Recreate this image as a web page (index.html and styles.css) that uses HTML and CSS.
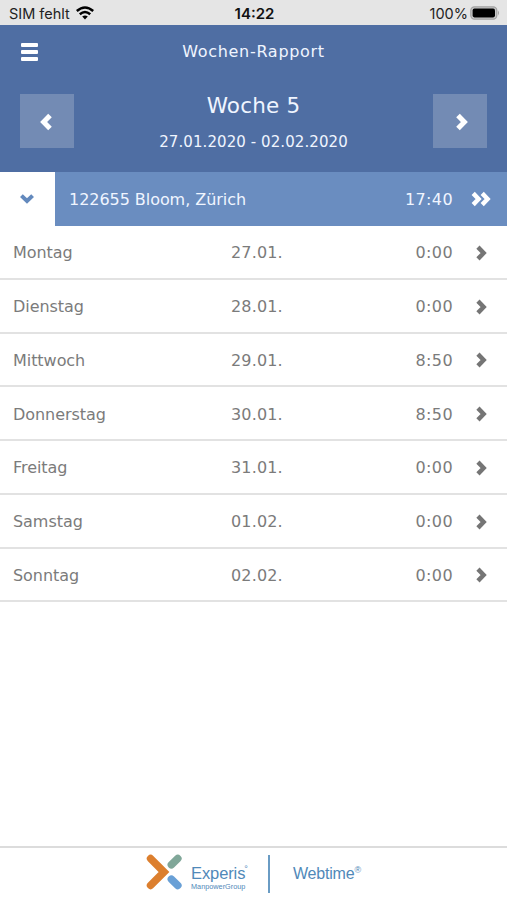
FILE: index.html
```html
<!DOCTYPE html>
<html lang="de">
  <head>
    <meta charset="UTF-8" />
    <meta name="viewport" content="width=device-width, initial-scale=1.0" />
    <title>Wochen-Rapport</title>
    <link rel="stylesheet" href="styles.css">
  </head>
  <body>
    <svg class="defs" width="0" height="0">
      <symbol id="chevron" viewBox="0 0 12 18">
        <path d="M2 2.4 L8.4 9 L2 15.6" fill="none" stroke="currentColor" stroke-width="5" />
      </symbol>
    </svg>
    <div class="status">
      <div class="carrier">
        <span>SIM fehlt</span>
        <svg class="wifi" width="18" height="14" viewBox="0 0 18 14">
          <g fill="none" stroke="#000" stroke-width="2.5">
            <path d="M0.8 5 Q9 -2 17.2 5" />
            <path d="M3.8 8.3 Q9 3.8 14.2 8.3" />
          </g>
          <path d="M6.2 10.6 Q9 8.3 11.8 10.6 L9 13.6 Z" />
        </svg>
      </div>
      <div class="clock">14:22</div>
      <div class="power">
        <span>100%</span>
        <svg width="30" height="14" viewBox="0 0 30 14">
          <rect x="0.8" y="0.8" width="26" height="12.4" rx="3.6" fill="#c9c9c9" stroke="#a2a2a2" stroke-width="1.2" />
          <rect x="2.6" y="2.6" width="22.4" height="8.8" rx="1.8" />
          <path d="M28 4.6 Q30 7 28 9.4 Z" fill="#a2a2a2" />
        </svg>
      </div>
    </div>
    <div class="header">
      <div class="title-bar">
        <div class="menu"><i></i><i></i><i></i></div>
        <h1>Wochen-Rapport</h1>
      </div>
      <div class="week">
        <div class="nav nav-prev"><svg class="prev" width="12" height="18"><use href="#chevron" /></svg></div>
        <div class="week-text">
          <h2>Woche 5</h2>
          <p>27.01.2020 - 02.02.2020</p>
        </div>
        <div class="nav nav-next"><svg width="12" height="18"><use href="#chevron" /></svg></div>
      </div>
    </div>
    <div class="project">
      <div class="toggle">
        <svg width="14" height="10" viewBox="0 0 14 10">
          <path d="M1.4 1.6 L7 7 L12.6 1.6" fill="none" stroke="currentColor" stroke-width="4" />
        </svg>
      </div>
      <div class="project-name">122655 Bloom, Zürich</div>
      <div class="hours">17:40</div>
      <svg class="double" width="20" height="16" viewBox="0 0 20 16">
        <path d="M2.2 2.4 L7.6 8 L2.2 13.6 M11.2 2.4 L16.6 8 L11.2 13.6" fill="none" stroke="currentColor" stroke-width="4.4" />
      </svg>
    </div>
    <div class="days">
      <div class="day">
        <span class="name">Montag</span><span class="date">27.01.</span><span class="hours">0:00</span>
        <svg class="arrow" width="11" height="16"><use href="#chevron" /></svg>
      </div>
      <div class="day">
        <span class="name">Dienstag</span><span class="date">28.01.</span><span class="hours">0:00</span>
        <svg class="arrow" width="11" height="16"><use href="#chevron" /></svg>
      </div>
      <div class="day">
        <span class="name">Mittwoch</span><span class="date">29.01.</span><span class="hours">8:50</span>
        <svg class="arrow" width="11" height="16"><use href="#chevron" /></svg>
      </div>
      <div class="day">
        <span class="name">Donnerstag</span><span class="date">30.01.</span><span class="hours">8:50</span>
        <svg class="arrow" width="11" height="16"><use href="#chevron" /></svg>
      </div>
      <div class="day">
        <span class="name">Freitag</span><span class="date">31.01.</span><span class="hours">0:00</span>
        <svg class="arrow" width="11" height="16"><use href="#chevron" /></svg>
      </div>
      <div class="day">
        <span class="name">Samstag</span><span class="date">01.02.</span><span class="hours">0:00</span>
        <svg class="arrow" width="11" height="16"><use href="#chevron" /></svg>
      </div>
      <div class="day">
        <span class="name">Sonntag</span><span class="date">02.02.</span><span class="hours">0:00</span>
        <svg class="arrow" width="11" height="16"><use href="#chevron" /></svg>
      </div>
    </div>
    <div class="footer">
      <svg class="logo" width="36" height="36" viewBox="0 0 36 36">
        <g fill="none" stroke-width="7.6" stroke-linecap="round">
          <path d="M25.4 10.8 L31.8 4.6" stroke="#80a799" />
          <path d="M25.4 25.2 L31.8 31.4" stroke="#69a0d6" />
          <path d="M4.6 4.6 L18 18 L4.6 31.4" stroke="#dc7f2e" stroke-linejoin="miter" />
        </g>
      </svg>
      <div class="brand">
        <div class="experis">Experis<sup>°</sup></div>
        <div class="group">ManpowerGroup</div>
      </div>
      <div class="divider"></div>
      <div class="webtime">Webtime<sup>®</sup></div>
    </div>
  </body>
</html>
```

FILE: styles.css
```css
* {
  box-sizing: border-box;
  margin: 0;
  padding: 0;
}
body {
  height: 900px;
  display: flex;
  flex-direction: column;
  overflow: hidden;
  background-color: #fff;
  color: #7b7b7b;
  font-family: Verdana, "DejaVu Sans", sans-serif;
  font-size: 16px;
}
svg {
  display: block;
  flex: none;
}
.defs {
  position: absolute;
}
.status {
  height: 25px;
  padding: 1px 7px 0 9px;
  display: grid;
  grid-template-columns: 1fr auto 1fr;
  align-items: center;
  background-color: #e5e5e5;
  color: #222;
  font-family: Inter, sans-serif;
  font-size: 14.5px;
}
.carrier,
.power {
  display: flex;
  align-items: center;
}
.carrier {
  gap: 6px;
}
.power {
  justify-content: flex-end;
  gap: 2px;
}
.clock {
  color: #111;
  font-size: 15px;
  font-weight: 600;
}
.header {
  height: 147px;
  background-color: #4f6ea3;
  color: #f0f5ff;
}
.title-bar {
  height: 53px;
  display: grid;
  grid-template-columns: 54px 1fr 54px;
  align-items: center;
}
.menu {
  padding: 1px 0 0 21px;
  display: flex;
  flex-direction: column;
  gap: 3px;
}
.menu i {
  width: 17px;
  height: 4px;
  border-radius: 1px;
  background-color: #fff;
}
h1 {
  text-align: center;
  font-size: 16px;
  font-weight: normal;
  letter-spacing: 0.7px;
}
.week {
  padding: 16px 20px 0;
  display: flex;
  justify-content: space-between;
}
.nav {
  width: 54px;
  height: 54px;
  padding-top: 1px;
  display: flex;
  align-items: center;
  justify-content: center;
  background-color: #738bb4;
  color: #fff;
}
.nav-prev {
  padding-right: 2px;
}
.nav-next {
  padding-left: 4px;
}
.prev {
  transform: rotate(180deg);
}
.week-text {
  text-align: center;
}
h2 {
  font-size: 21.5px;
  font-weight: normal;
  line-height: 24px;
  letter-spacing: 0.2px;
}
.week-text p {
  margin-top: 14px;
  font-size: 15px;
  line-height: 20px;
  letter-spacing: 0.08px;
}
.project {
  height: 54px;
  padding-right: 16px;
  display: flex;
  align-items: center;
  background-color: #6a8dc0;
  color: #f0f5ff;
}
.toggle {
  width: 55px;
  height: 100%;
  padding-right: 1px;
  display: flex;
  align-items: center;
  justify-content: center;
  background-color: #fff;
  color: #6389bd;
}
.project-name {
  flex: 1;
  padding-left: 14px;
  letter-spacing: -0.05px;
}
.hours {
  letter-spacing: 0.4px;
}
.double {
  margin-left: 18px;
  color: #fff;
}
.day {
  height: 53.75px;
  padding: 2px 20px 0 13px;
  display: flex;
  align-items: center;
  border-bottom: 2px solid #e2e2e2;
}
.name {
  width: 218px;
  letter-spacing: -0.05px;
}
.date {
  flex: 1;
  letter-spacing: 0.15px;
}
.arrow {
  margin-left: 23px;
  color: #757575;
}
.footer {
  height: 54px;
  margin-top: auto;
  padding-left: 146px;
  display: flex;
  align-items: center;
  border-top: 2px solid #dcdcdc;
  color: #5089b9;
  font-family: "Liberation Sans", Arial, sans-serif;
}
.logo {
  margin-bottom: 4px;
}
.brand {
  width: 56px;
  margin: 7px 0 0 9px;
}
.experis {
  font-size: 16.5px;
  line-height: 18px;
  letter-spacing: -0.1px;
}
.group {
  font-size: 7.3px;
  line-height: 10px;
}
sup {
  font-size: 9px;
  line-height: 0;
}
.experis sup {
  margin-left: -1px;
}
.divider {
  width: 2px;
  height: 38px;
  margin: 0 23px 0 21px;
  background-color: #6a9cc4;
}
.webtime {
  font-size: 16px;
  letter-spacing: -0.2px;
}
```
